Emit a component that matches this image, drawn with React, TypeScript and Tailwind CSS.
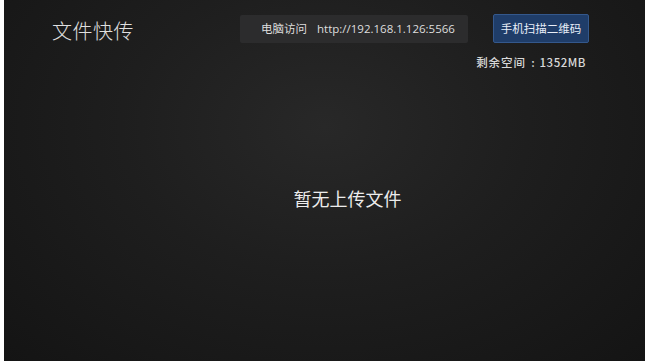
export default function App() {
  return (
    <div className="w-[650px] h-[361px] bg-white flex" style={{ fontFamily: '"Noto Sans CJK SC", "Noto Sans", sans-serif' }}>
      <div className="ml-[4px] w-[641px] h-full flex flex-col bg-[radial-gradient(ellipse_at_50%_35%,#282828_0%,#1e1e1e_45%,#141414_100%)]">
        <div className="flex items-start pt-[14px] pl-[48px] pr-[56px]">
          <div className="mt-[3px] text-[20px] leading-[28px] text-[#e0e0e0] font-light tracking-[0.5px]">文件快传</div>
          <div className="ml-auto flex items-center gap-[25px]">
            <div className="w-[228px] h-[28px] mt-[1px] bg-[#2c2c2d] rounded-[2px] flex items-center pl-[21px] text-[11.5px] text-[#dedede]">
              <span>电脑访问</span>
              <span className="ml-[10px]" style={{ fontFamily: '"Open Sans", "Noto Sans", sans-serif' }}>http://192.168.1.126:5566</span>
            </div>
            <div className="w-[96px] h-[29px] bg-[#1f3d69] border border-[#34588c] rounded-[2px] flex items-center justify-center text-[11.5px] text-[#e8eef8]">
              手机扫描二维码
            </div>
          </div>
        </div>
        <div className="flex justify-end pr-[59px] mt-[10px] text-[11.5px] leading-[14px] text-[#d8d8d8] font-medium">
          <span className="tracking-[1px]">剩余空间</span>
          <span className="mx-[5px]">:</span>
          <span className="tracking-[0.5px]">1352MB</span>
        </div>
        <div className="flex-1 flex items-start justify-center pt-[117px] pl-[46px]">
          <div className="text-[18px] leading-[24px] text-[#ececec]">暂无上传文件</div>
        </div>
      </div>
    </div>
  )
}
